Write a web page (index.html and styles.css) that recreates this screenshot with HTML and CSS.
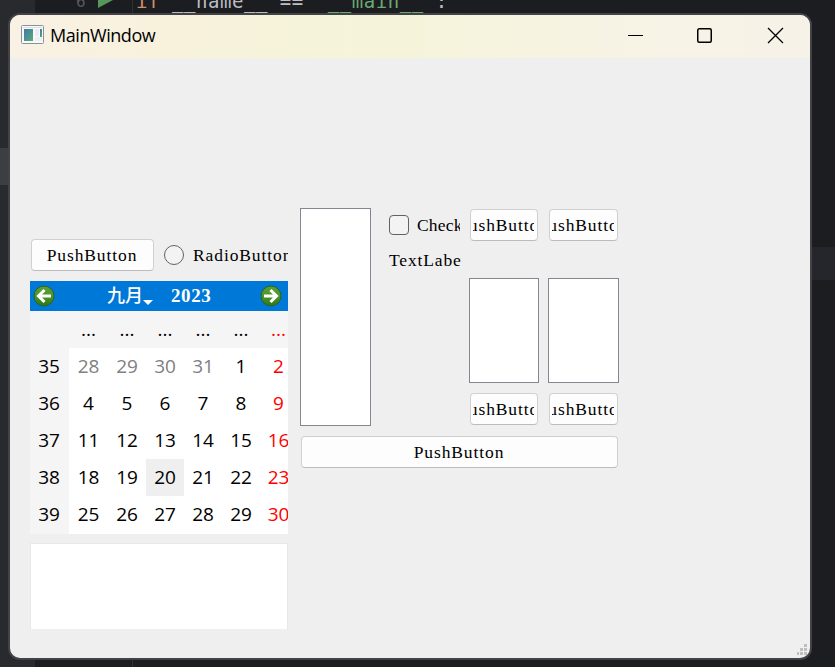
FILE: index.html
```html
<!DOCTYPE html>
<html lang="zh-CN">
<head>
<meta charset="utf-8">
<title>MainWindow</title>
<link rel="stylesheet" href="styles.css">
</head>
<body>
<div class="code"><span class="num">6</span><svg class="run" width="16" height="18" viewBox="0 0 16 18"><path d="M1 0L16 9L1 17Z" fill="#57965c"/></svg><span class="stmt"><span class="kw">if</span> __name__ == <span class="str">'__main__'</span>:</span></div>
<main class="window">
  <header class="titlebar">
    <svg class="appicon" width="23" height="19" viewBox="0 0 23 19">
      <defs><linearGradient id="g" x1="0" y1="0" x2="1" y2="1"><stop stop-color="#3f78a8"/><stop offset="1" stop-color="#58ad78"/></linearGradient></defs>
      <rect x=".5" y=".5" width="22" height="18" rx="1" fill="#f8f9fa" stroke="#8b9297"/>
      <path d="M2 2.5H21" stroke="#d8e0e5"/>
      <rect x="3" y="4" width="9" height="12" fill="url(#g)"/>
      <rect x="14" y="4" width="4" height="7" fill="#e9edef"/><rect x="14" y="12" width="7" height="4" fill="#edf0f1"/>
      <rect x="19" y="4" width="2" height="8" fill="url(#g)"/>
    </svg>
    <h1>MainWindow</h1>
    <svg class="controls" width="157" height="17" viewBox="0 0 157 17" fill="none" stroke="#000">
      <path d="M0 8.5H15" stroke-width="1"/>
      <rect x="69.75" y="1.75" width="13.5" height="13.5" rx="1.5" stroke-width="1.5"/>
      <path d="M140 1L155 16M155 1L140 16" stroke-width="1.3"/>
    </svg>
  </header>
  <div class="content">
    <section class="left">
      <div class="choices">
        <button class="btn first"><span>PushButton</span></button>
        <span class="radio"></span><span class="label">RadioButton</span>
      </div>
      <div class="calendar">
        <div class="calnav">
          <svg width="22" height="22" viewBox="0 0 22 22"><defs><linearGradient id="ball" x1="0" y1="0" x2="0" y2="1"><stop stop-color="#5b9f38"/><stop offset=".5" stop-color="#4c9527"/><stop offset="1" stop-color="#2c761a"/></linearGradient></defs><circle cx="11" cy="11" r="10" fill="url(#ball)" stroke="#2b651d"/><path d="M18 11H6M11.5 5L5.5 11L11.5 17" fill="none" stroke="#fff" stroke-width="3"/></svg>
          <span class="month">九月<i></i></span><span class="year">2023</span>
          <svg width="22" height="22" viewBox="0 0 22 22"><circle cx="11" cy="11" r="10" fill="url(#ball)" stroke="#2b651d"/><path d="M4 11H16M10.5 5L16.5 11L10.5 17" fill="none" stroke="#fff" stroke-width="3"/></svg>
        </div>
        <div class="days">
          <span class="wk hd"></span><span class="hd">...</span><span class="hd">...</span><span class="hd">...</span><span class="hd">...</span><span class="hd">...</span><span class="hd red">...</span>
          <span class="wk">35</span><span class="dim">28</span><span class="dim">29</span><span class="dim">30</span><span class="dim">31</span><span>1</span><span class="red">2</span>
          <span class="wk">36</span><span>4</span><span>5</span><span>6</span><span>7</span><span>8</span><span class="red">9</span>
          <span class="wk">37</span><span>11</span><span>12</span><span>13</span><span>14</span><span>15</span><span class="red">16</span>
          <span class="wk">38</span><span>18</span><span>19</span><span class="today">20</span><span>21</span><span>22</span><span class="red">23</span>
          <span class="wk">39</span><span>25</span><span>26</span><span>27</span><span>28</span><span>29</span><span class="red">30</span>
        </div>
      </div>
      <div class="textarea"></div>
    </section>
    <section class="right">
      <div class="upper">
        <div class="view tall"></div>
        <div class="checks">
          <div class="checkrow"><span class="check"></span><span class="label">CheckBox</span></div>
          <div class="textlabel">TextLabel</div>
        </div>
        <div class="stack">
          <button class="btn"><span>PushButton</span></button><button class="btn"><span>PushButton</span></button>
          <div class="view"></div><div class="view"></div>
          <button class="btn"><span>PushButton</span></button><button class="btn"><span>PushButton</span></button>
        </div>
      </div>
      <button class="btn wide"><span>PushButton</span></button>
    </section>
  </div>
  <svg class="grip" width="11" height="11" viewBox="0 0 11 11" fill="#bfbfbf"><path d="M7 0h3v3h-3zM3 4h3v3h-3zM7 4h3v3h-3zM0 8h2v3h-2zM3 8h3v3h-3zM7 8h3v3h-3z"/></svg>
</main>
</body>
</html>
```
FILE: styles.css
```css
* { box-sizing: border-box; }
body {
  margin: 0; width: 835px; height: 667px; overflow: hidden; position: relative;
  background:
    linear-gradient(#3c3e42, #3c3e42) 0 148px / 10px 37px no-repeat,
    linear-gradient(#25262b, #25262b) 810px 247px / 25px 33px no-repeat,
    linear-gradient(#303135, #303135) 132px 0 / 1px 667px no-repeat,
    linear-gradient(90deg, #292a2e 35px, #1c1d20 35px);
}
.code {
  height: 13px; overflow: hidden; display: flex; padding-left: 76px;
  font: 19px/20px "DejaVu Sans Mono", monospace; color: #bcbec4;
}
.code .num { width: 21px; margin-top: -8px; font-size: 16px; color: #555962; }
.run { margin-top: -9px; width: 16px; flex: none; }
.stmt { margin: -9px 0 0 23px; white-space: pre; letter-spacing: .55px; }
.kw { color: #cf8e6d; }
.str { color: #6aab73; }
.window {
  position: relative; width: 804px; height: 647px; margin-left: 8px;
  border: 2px solid #434347; border-radius: 12px; overflow: hidden; background: #efefef;
}
.titlebar {
  height: 43px; display: flex; align-items: center; padding: 0 25px 2px 11px;
  background: linear-gradient(90deg, #f9f1e4, #f8f2dc 20%, #f5f4da 48%, #f7f3e4 75%, #f7f2e8);
}
.titlebar h1 { margin: -1px 0 0 6px; font: 18px/24px "Open Sans", sans-serif; letter-spacing: -.45px; color: #000; }
.appicon { margin-top: -2px; }
.controls { margin-left: auto; }
.content { display: flex; gap: 12px; padding: 150px 0 0 20px; }
.left { width: 258px; padding-top: 31px; overflow: hidden; }
.right { width: 319px; }
.choices { height: 32px; display: flex; align-items: center; padding-left: 1px; }
.btn, .label, .textlabel { font: 17.5px/24px "Liberation Serif", serif; letter-spacing: .9px; color: #000; }
.btn {
  height: 32px; padding: 0 3px 0 2px; border: 1px solid #d0d0d0; border-bottom-color: #bcbcbc;
  border-radius: 4px; background: #fdfdfd; display: block; min-width: 0;
}
.btn span { display: flex; justify-content: center; overflow: hidden; margin-top: -1px; }
.first { width: 123px; flex: none; }
.radio { width: 20px; height: 20px; flex: none; border: 1px solid #626262; border-radius: 50%; background: #f3f3f3; margin: 0 9px 0 10px; }
.label { overflow: hidden; white-space: nowrap; margin-top: -1px; }
.checkrow .label { letter-spacing: .2px; }
.calendar { margin-top: 10px; height: 253px; overflow: hidden; background: #fff; }
.calnav { height: 30px; display: flex; align-items: center; padding: 0 6px 0 3px; background: #0078d7; color: #fff; font: bold 18px/26px "Liberation Serif", "Noto Sans CJK SC", serif; }
.month { margin-left: 52px; display: flex; font-weight: 500; }
.month i { border: 5px solid transparent; border-top-color: #fff; border-bottom: 0; align-self: flex-end; margin-bottom: 4px; }
.year { margin: 0 auto 0 18px; font-size: 19px; letter-spacing: .6px; }
.days {
  display: grid; grid-template-columns: 39px 39px repeat(5, 38px); grid-template-rows: repeat(5, 37px) 38px;
  width: 268px; font: 19px/36px "Open Sans", sans-serif; text-align: center; color: #000;
}
.wk, .days .hd { background: #f5f5f5; }
.days .wk { padding-right: 1px; }
.hd { line-height: 37px; }
.dim { color: #808080; }
.days .red { color: #f00; padding-right: 1px; }
.today { background: #efefef; }
.textarea { height: 87px; margin-top: 9px; background: #fff; border: 1px solid #e8e8e8; border-bottom-color: #efefef; }
.upper { display: flex; height: 218px; }
.view { background: #fff; border: 1px solid #828790; }
.tall { width: 71px; }
.checks { width: 72px; margin-left: 18px; padding-top: 1px; }
.checkrow { display: flex; align-items: center; height: 32px; width: 71px; }
.check { width: 20px; height: 20px; flex: none; margin-right: 8px; border: 1px solid #626262; border-radius: 4px; background: #f3f3f3; }
.textlabel { margin-top: 7px; overflow: hidden; letter-spacing: .85px; }
.stack {
  margin-left: 8px; padding-top: 1px; display: grid; column-gap: 9px; align-content: start;
  grid-template-columns: 70px 71px; grid-template-rows: 32px 37px 105px 10px 32px;
}
.stack .btn { margin: 0 1px; }
.stack > :nth-child(3), .stack > :nth-child(4) { grid-row: 3; }
.stack > :nth-child(5), .stack > :nth-child(6) { grid-row: 5; }
.wide { width: 317px; margin: 10px 1px 0; }
.grip { position: absolute; right: 2px; bottom: 3px; }
```
